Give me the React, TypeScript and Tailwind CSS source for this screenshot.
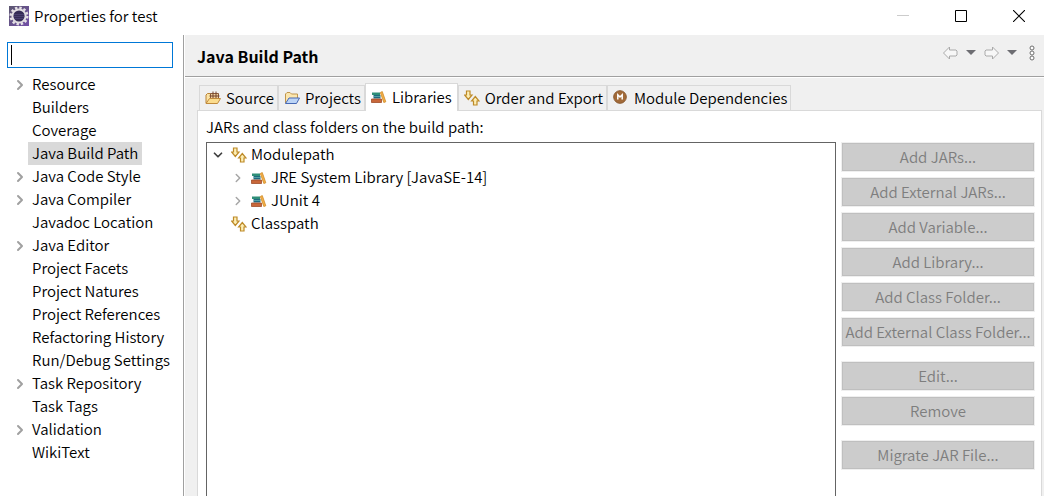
import React, { useState } from 'react';
import { ChevronDown, ChevronRight } from 'lucide-react';
import clsx from 'clsx';

interface Page {
  name: string;
  expandable?: boolean;
}

interface EntryProps {
  label: string;
  icon: React.ReactNode;
  state?: 'open' | 'closed';
}

const pages: Page[] = [
  { name: 'Resource', expandable: true },
  { name: 'Builders' },
  { name: 'Coverage' },
  { name: 'Java Build Path' },
  { name: 'Java Code Style', expandable: true },
  { name: 'Java Compiler', expandable: true },
  { name: 'Javadoc Location' },
  { name: 'Java Editor', expandable: true },
  { name: 'Project Facets' },
  { name: 'Project Natures' },
  { name: 'Project References' },
  { name: 'Refactoring History' },
  { name: 'Run/Debug Settings' },
  { name: 'Task Repository', expandable: true },
  { name: 'Task Tags' },
  { name: 'Validation', expandable: true },
  { name: 'WikiText' },
];

const actionGroups = [
  ['Add JARs...', 'Add External JARs...', 'Add Variable...', 'Add Library...', 'Add Class Folder...', 'Add External Class Folder...'],
  ['Edit...', 'Remove'],
  ['Migrate JAR File...'],
];

function AppIcon() {
  return (
    <svg viewBox="0 0 20 20" className="h-5 w-5 shrink-0" aria-hidden="true">
      <defs>
        <linearGradient id="app-bg" x1="0" y1="0" x2="1" y2="1">
          <stop offset="0" stopColor="#5c5770" />
          <stop offset="1" stopColor="#7350a8" />
        </linearGradient>
      </defs>
      <rect width="20" height="20" fill="url(#app-bg)" />
      <circle cx="10" cy="10" r="8.3" fill="none" stroke="#e6e2e6" strokeWidth="2.4" strokeDasharray="2.4 1.95" />
      <circle cx="10" cy="10" r="6.6" fill="#352c56" stroke="#e2dee2" strokeWidth="2" />
      <path d="M5 8.500h10M4.800 10.500h10.400M5 12.500h10" stroke="#504577" strokeWidth="0.8" />
    </svg>
  );
}

function SourceIcon() {
  return (
    <svg viewBox="0 0 16 14" className="h-3.5 w-4 shrink-0" aria-hidden="true">
      <path d="M1 12V4L2.500 2.500H5.500V12z" fill="#fbe3a4" stroke="#b98236" />
      <path d="M5.500 2.500h8v6h-8z" fill="#f3d4a0" stroke="#8a5a3a" />
      <path d="M8 0.500v7M11 0.500v7M4.500 5h10" stroke="#74452f" />
      <path d="M1 12.500L4.500 7.500h11l-3 5z" fill="#fbdc8e" stroke="#c08a3c" />
    </svg>
  );
}

function ProjectsIcon() {
  return (
    <svg viewBox="0 0 16 14" className="h-3.5 w-4 shrink-0" aria-hidden="true">
      <path d="M1.500 12V3L3 1.500h3L7.500 3h6v4" fill="#fbe6ae" stroke="#c0954c" />
      <path d="M1.500 12.500L5 7h10.500l-3 5.500z" fill="#bcd4f6" stroke="#4668b4" />
    </svg>
  );
}

function BooksIcon() {
  return (
    <svg viewBox="0 0 16 12" className="h-3 w-4 shrink-0" aria-hidden="true">
      <path d="M1 1.500h8V4H1z" fill="#2f8f78" />
      <path d="M2.500 4h7v3.500h-7z" fill="#1f6a80" />
      <path d="M3 5.500h6" stroke="#58a6a8" strokeWidth="0.9" />
      <path d="M0.500 8h10v3.500h-10z" fill="#c8673a" stroke="#a04c28" strokeWidth="0.8" />
      <path d="M9.300 1.500l2-0.900L14.800 10.800l-2 0.700z" fill="#f2b04a" stroke="#d08a26" strokeWidth="0.8" />
    </svg>
  );
}

function OrderIcon() {
  return (
    <svg viewBox="0 0 16 16" className="h-4 w-4 shrink-0" aria-hidden="true" fill="#fdeeb4" stroke="#bd8a28" strokeWidth="1.2">
      <path d="M2.500 1h3.500v4h2L4.300 9.500 0.600 5h1.900z" />
      <path d="M9.500 15h3.500v-4h2L11.300 6.500l-3.700 4.500h1.900z" />
    </svg>
  );
}

function ModuleIcon() {
  return (
    <svg viewBox="0 0 16 16" className="h-4 w-4 shrink-0" aria-hidden="true">
      <circle cx="7" cy="7" r="6.300" fill="#a26a38" stroke="#8a5a30" />
      <path d="M4.800 9.600V4.800L7 7l2.200-2.200v4.800" fill="none" stroke="#fff" strokeWidth="1.500" />
    </svg>
  );
}

function ArrowIcon({ flipped }: { flipped?: boolean }) {
  return (
    <svg viewBox="0 0 15 14" className={clsx('h-3.5 w-[15px]', flipped && 'rotate-180')} aria-hidden="true">
      <path d="M0.500 7l6-6v3H13l1 1v4l-1 1H6.500v3z" fill="#f7f7f7" stroke="#aaaaaa" strokeLinejoin="round" />
    </svg>
  );
}

function CaretIcon() {
  return (
    <svg viewBox="0 0 10 5" className="h-[5px] w-2.5" aria-hidden="true">
      <path d="M0 0h10L5 5z" fill="#6d6d72" />
    </svg>
  );
}

function MenuIcon() {
  return (
    <svg viewBox="0 0 6 16" className="h-4 w-1.5" aria-hidden="true" fill="#fff" stroke="#6e6e6e">
      <circle cx="3" cy="3" r="2" />
      <circle cx="3" cy="8" r="2" />
      <circle cx="3" cy="13" r="2" />
    </svg>
  );
}

const tabs = [
  { name: 'Source', icon: <SourceIcon /> },
  { name: 'Projects', icon: <ProjectsIcon /> },
  { name: 'Libraries', icon: <BooksIcon /> },
  { name: 'Order and Export', icon: <OrderIcon /> },
  { name: 'Module Dependencies', icon: <ModuleIcon /> },
];

function TitleBar() {
  return (
    <header className="flex h-[35px] items-center bg-white pr-[19px] pb-[3px] pl-[9px]">
      <AppIcon />
      <h1 className="ml-[5px] flex-1">Properties for test</h1>
      <div className="flex gap-[46px]">
        <button aria-label="Minimize">
          <svg viewBox="0 0 12 12" className="h-3 w-3"><path d="M0 5.500h12" stroke="#cccccc" /></svg>
        </button>
        <button aria-label="Maximize">
          <svg viewBox="0 0 12 12" className="h-3 w-3"><path d="M0.500 0.500h11v11H0.500z" fill="none" stroke="#000" /></svg>
        </button>
        <button aria-label="Close">
          <svg viewBox="0 0 12 12" className="h-3 w-3"><path d="M0 0l12 12M12 0L0 12" stroke="#000" strokeWidth="1.100" /></svg>
        </button>
      </div>
    </header>
  );
}

function Sidebar({ selected, onSelect }: { selected: string; onSelect: (name: string) => void }) {
  const [filter, setFilter] = useState('');

  return (
    <aside className="w-[184px] shrink-0 border-r border-[#a0a0a0] bg-white pt-[7px]">
      <div className="mr-[10px] ml-[7px] flex h-[26px] items-center border border-[#0078d7] px-[3px]">
        <span className="h-5 w-px bg-black" />
        <input
          type="text"
          aria-label="Filter"
          value={filter}
          onChange={(e) => setFilter(e.target.value)}
          className="w-full outline-none"
        />
      </div>
      <ul className="mt-[5px]">
        {pages.map((page) => (
          <li key={page.name} className="flex h-[23px] items-center pl-3">
            <span className="flex w-4 justify-center">
              {page.expandable && <ChevronRight className="h-4 w-4 text-[#a0a0a0]" strokeWidth={3} />}
            </span>
            <button
              onClick={() => onSelect(page.name)}
              className={clsx('h-full px-1 pb-0.5 whitespace-nowrap', page.name === selected && 'bg-[#d9d9d9]')}
            >
              {page.name}
            </button>
          </li>
        ))}
      </ul>
    </aside>
  );
}

function PageHeader({ title }: { title: string }) {
  return (
    <div className="flex h-[42px] items-center border-b border-[#a0a0a0] pr-[9px] pl-3">
      <h2 className="flex-1 text-base font-bold">{title}</h2>
      <div className="flex items-center gap-2 pb-1.5">
        <button aria-label="Back"><ArrowIcon /></button>
        <button aria-label="Back history"><CaretIcon /></button>
        <button aria-label="Forward"><ArrowIcon flipped /></button>
        <button aria-label="Forward history"><CaretIcon /></button>
        <button aria-label="View menu" className="ml-1"><MenuIcon /></button>
      </div>
    </div>
  );
}

function Entry({ label, icon, state }: EntryProps) {
  return (
    <div className="flex h-[23px] items-center">
      <span className="flex w-5 items-center">
        {state === 'open' && <ChevronDown className="h-3.5 w-3.5 text-[#404040]" strokeWidth={3} />}
        {state === 'closed' && <ChevronRight className="h-3.5 w-3.5 text-[#a6a6a6]" strokeWidth={2.5} />}
      </span>
      <span className="flex w-5">{icon}</span>
      <span className="pb-0.5">{label}</span>
    </div>
  );
}

export default function App() {
  const [page, setPage] = useState('Java Build Path');
  const [tab, setTab] = useState('Libraries');

  return (
    <div className="flex min-h-screen flex-col overflow-hidden bg-white font-['Noto_Sans_CJK_KR','Noto_Sans',sans-serif] text-[15px] leading-[22px] font-[350] text-black">
      <TitleBar />
      <div className="flex flex-1">
        <Sidebar selected={page} onSelect={setPage} />
        <main className="flex min-w-0 flex-1 flex-col border-l border-white bg-[#f0f0f0]">
          <PageHeader title={page} />
          <div className="flex flex-1 flex-col border-t border-white pt-[5px] pr-0.5 pl-3">
            <div role="tablist" className="flex items-end pl-0.5">
              {tabs.map(({ name, icon }) => (
                <button
                  key={name}
                  role="tab"
                  aria-selected={name === tab}
                  onClick={() => setTab(name)}
                  className={clsx(
                    'flex items-center gap-[5px] border border-b-0 border-[#d9d9d9] whitespace-nowrap',
                    name === tab ? 'z-10 -mb-px h-7 bg-white px-[5px] pb-0.5' : 'h-[25px] bg-[#f0f0f0] pr-[3px] pl-[5px]',
                  )}
                >
                  {icon}
                  {name}
                </button>
              ))}
            </div>
            <section className="flex flex-1 flex-col border border-b-0 border-[#d9d9d9] bg-white pt-[5px] pr-[7px] pl-2">
              <p>JARs and class folders on the build path:</p>
              <div className="mt-1 flex flex-1 gap-1.5">
                <ul className="flex-1 border border-b-0 border-[#646464] pl-1">
                  <li>
                    <Entry label="Modulepath" icon={<OrderIcon />} state="open" />
                    <ul className="pl-5">
                      <li><Entry label="JRE System Library [JavaSE-14]" icon={<BooksIcon />} state="closed" /></li>
                      <li><Entry label="JUnit 4" icon={<BooksIcon />} state="closed" /></li>
                    </ul>
                  </li>
                  <li><Entry label="Classpath" icon={<OrderIcon />} /></li>
                </ul>
                <div className="flex w-[192px] flex-col gap-4 pt-px">
                  {actionGroups.map((group) => (
                    <div key={group[0]} className="flex flex-col gap-[7px]">
                      {group.map((action) => (
                        <button
                          key={action}
                          disabled
                          className="h-7 border border-[#bfbfbf] bg-[#cccccc] whitespace-nowrap text-[#7e7e7e] ring-1 ring-[#efefef]"
                        >
                          {action}
                        </button>
                      ))}
                    </div>
                  ))}
                </div>
              </div>
            </section>
          </div>
        </main>
      </div>
    </div>
  );
}
